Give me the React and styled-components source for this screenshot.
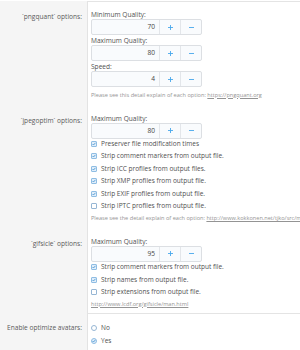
import React from 'react';
import styled, { createGlobalStyle } from 'styled-components';

const Global = createGlobalStyle`
  html, body { margin: 0; padding: 0; background: #fff; overflow: hidden; }
  body { font-family: "Open Sans", "Noto Sans", sans-serif; }
`;

const Form = styled.div`
  width: 300px;
  height: 350px;
  overflow: hidden;
  display: flex;
  flex-direction: column;
  padding-top: 1px;
  box-sizing: border-box;
`;

const Row = styled.div`
  display: grid;
  grid-template-columns: 88px 1fr;
  flex: ${p => (p.$fill ? '1' : 'none')};
  min-width: 0;
`;

const Label = styled.div`
  background: #f5f5f5;
  border-right: 1px solid #e3e3e3;
  text-align: right;
  padding: ${p => p.$pt}px 5px 0 0;
  font-size: 6.6px;
  line-height: 9px;
  color: #5a5a5a;
  white-space: nowrap;
`;

const Content = styled.div`
  min-width: 0;
  padding: ${p => p.$pt ?? 8}px 0 ${p => p.$pb ?? 7}px 3px;
  border-top: ${p => (p.$top ? '1px solid #e4e4e4' : 'none')};
  border-bottom: ${p => (p.$bottom ? '1px solid #e4e4e4' : 'none')};
  white-space: nowrap;
`;

const Field = styled.div`
  & + & { margin-top: 1px; }
`;

const FieldLabel = styled.div`
  font-size: 6.6px;
  line-height: 9px;
  color: #505050;
`;

const Spinner = styled.div`
  display: flex;
  width: 111px;
  height: 16px;
  box-sizing: border-box;
  border: 1px solid #dcdfe3;
  border-radius: 2px;
  background: #f9fbfd;
`;

const NumberBox = styled.div`
  flex: 1;
  text-align: right;
  padding-right: 4px;
  font-size: 6.6px;
  line-height: 14px;
  color: #444;
`;

const SpinButton = styled.div`
  width: 20px;
  border-left: 1px solid #e3e6ea;
  display: flex;
  align-items: center;
  justify-content: center;
  color: #47a7eb;
`;

const Hint = styled.div`
  margin-top: 3.5px;
  font-size: 5.6px;
  line-height: 8px;
  color: #949494;
  a { color: #949494; text-decoration: underline; }
`;

const CheckList = styled.div`
  margin-top: 1px;
  display: flex;
  flex-direction: column;
  gap: 4.6px;
`;

const Choice = styled.div`
  display: flex;
  align-items: center;
  gap: 4px;
  font-size: 6.5px;
  line-height: 8px;
  color: #505050;
`;

const Box = styled.span`
  width: 6px;
  height: 6px;
  box-sizing: border-box;
  border: 1px solid ${p => (p.$on ? '#8fbde3' : '#96b6d4')};
  border-radius: ${p => (p.$round ? '50%' : '1px')};
  background: ${p => (p.$on ? '#e1eefa' : '#fff')};
  display: flex;
  align-items: center;
  justify-content: center;
  flex: none;
`;

const RadioList = styled.div`
  display: flex;
  flex-direction: column;
  gap: 4px;
  & > div { line-height: 9px; }
`;

const Plus = () => (
  <svg width="5" height="5" viewBox="0 0 5 5">
    <path d="M2.5 0v5M0 2.5h5" stroke="currentColor" strokeWidth="0.9" />
  </svg>
);
const Minus = () => (
  <svg width="5" height="5" viewBox="0 0 5 5">
    <path d="M0 2.5h5" stroke="currentColor" strokeWidth="0.9" />
  </svg>
);
const Tick = () => (
  <svg width="4" height="4" viewBox="0 0 4 4">
    <path d="M0.5 2l1 1 2-2.2" fill="none" stroke="#3d8fd1" strokeWidth="0.8" />
  </svg>
);

const NumberField = ({ label, value }) => (
  <Field>
    <FieldLabel>{label}</FieldLabel>
    <Spinner>
      <NumberBox>{value}</NumberBox>
      <SpinButton><Plus /></SpinButton>
      <SpinButton><Minus /></SpinButton>
    </Spinner>
  </Field>
);

const Check = ({ on, children }) => (
  <Choice>
    <Box $on={on}>{on && <Tick />}</Box>
    <span>{children}</span>
  </Choice>
);

const Radio = ({ on, children }) => (
  <Choice>
    <Box $on={on} $round>{on && <Tick />}</Box>
    <span>{children}</span>
  </Choice>
);

export default function App() {
  return (
    <>
      <Global />
      <Form>
        <Row>
          <Label $pt={11}>`pngquant` options:</Label>
          <Content $top>
            <NumberField label="Minimum Quality:" value="70" />
            <NumberField label="Maximum Quality:" value="80" />
            <NumberField label="Speed:" value="4" />
            <Hint>
              Please see this detail explain of each option: <a href="#">https://pngquant.org</a>
            </Hint>
          </Content>
        </Row>
        <Row>
          <Label $pt={10}>`jpegoptim` options:</Label>
          <Content>
            <NumberField label="Maximum Quality:" value="80" />
            <CheckList>
              <Check on>Preserver file modification times</Check>
              <Check on>Strip comment markers from output file.</Check>
              <Check on>Strip ICC profiles from output files.</Check>
              <Check on>Strip XMP profiles from output file.</Check>
              <Check on>Strip EXIF profiles from output file.</Check>
              <Check>Strip IPTC profiles from output file.</Check>
            </CheckList>
            <Hint>
              Please see the detail explain of each option: <a href="#">http://www.kokkonen.net/tjko/src/man/jpegoptim.txt</a>
            </Hint>
          </Content>
        </Row>
        <Row>
          <Label $pt={10.5}>`gifsicle` options:</Label>
          <Content $bottom $pb={5}>
            <NumberField label="Maximum Quality:" value="95" />
            <CheckList>
              <Check on>Strip comment markers from output file.</Check>
              <Check on>Strip names from output file.</Check>
              <Check>Strip extensions from output file.</Check>
            </CheckList>
            <Hint>
              <a href="#">http://www.lcdf.org/gifsicle/man.html</a>
            </Hint>
          </Content>
        </Row>
        <Row $fill>
          <Label $pt={9.5}>Enable optimize avatars:</Label>
          <Content $pt={9.5}>
            <RadioList>
              <Radio>No</Radio>
              <Radio on>Yes</Radio>
            </RadioList>
          </Content>
        </Row>
      </Form>
    </>
  );
}
